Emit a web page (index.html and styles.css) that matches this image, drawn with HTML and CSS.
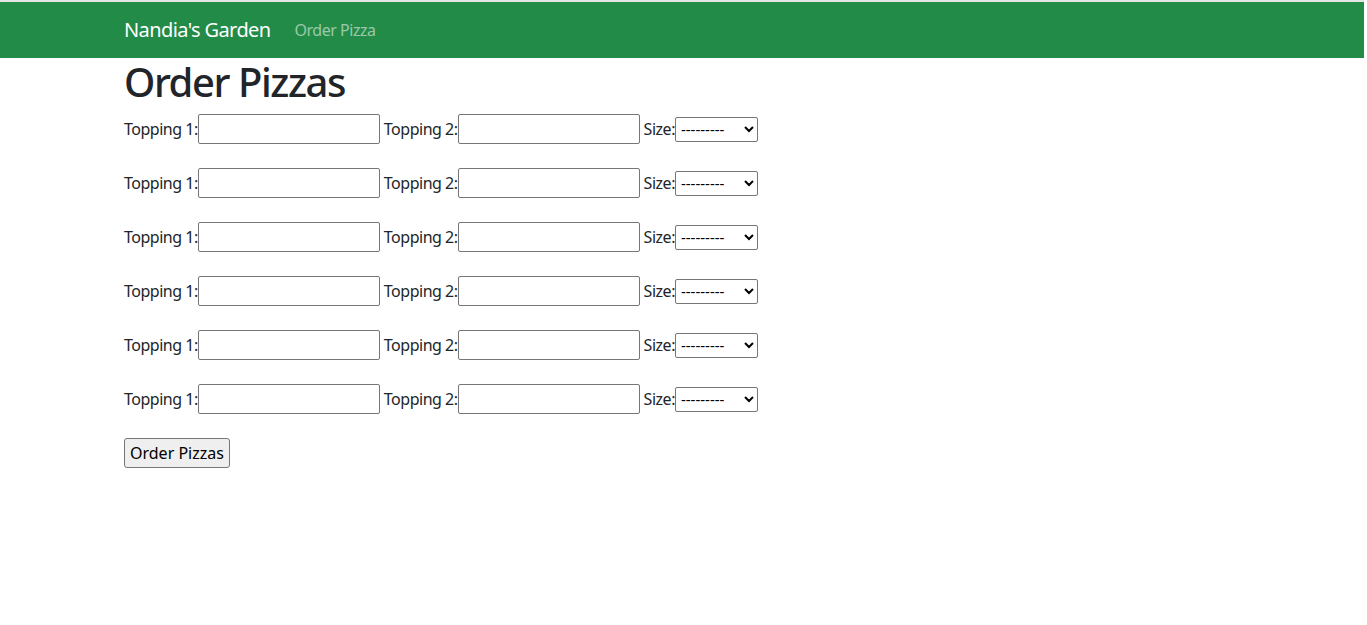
FILE: index.html
```html
<!DOCTYPE html>
<html lang="en">
<head>
<meta charset="utf-8">
<title>Order Pizzas</title>
<link rel="stylesheet" href="styles.css">
</head>
<body>
<nav class="navbar">
  <div class="container nav-inner">
    <a class="brand" href="#">Nandia's Garden</a>
    <a class="nav-link" href="#">Order Pizza</a>
  </div>
</nav>
<main class="container">
  <h1 class="title">Order Pizzas</h1>
  <form class="order-form">
    <div class="pizza-row">
      <label class="lbl">Topping 1:</label><input class="txt" type="text">
      <label class="lbl gap">Topping 2:</label><input class="txt" type="text">
      <label class="lbl gap">Size:</label><select class="sel"><option>---------</option><option>Small</option><option>Medium</option><option>Large</option></select>
    </div>
    <div class="pizza-row">
      <label class="lbl">Topping 1:</label><input class="txt" type="text">
      <label class="lbl gap">Topping 2:</label><input class="txt" type="text">
      <label class="lbl gap">Size:</label><select class="sel"><option>---------</option><option>Small</option><option>Medium</option><option>Large</option></select>
    </div>
    <div class="pizza-row">
      <label class="lbl">Topping 1:</label><input class="txt" type="text">
      <label class="lbl gap">Topping 2:</label><input class="txt" type="text">
      <label class="lbl gap">Size:</label><select class="sel"><option>---------</option><option>Small</option><option>Medium</option><option>Large</option></select>
    </div>
    <div class="pizza-row">
      <label class="lbl">Topping 1:</label><input class="txt" type="text">
      <label class="lbl gap">Topping 2:</label><input class="txt" type="text">
      <label class="lbl gap">Size:</label><select class="sel"><option>---------</option><option>Small</option><option>Medium</option><option>Large</option></select>
    </div>
    <div class="pizza-row">
      <label class="lbl">Topping 1:</label><input class="txt" type="text">
      <label class="lbl gap">Topping 2:</label><input class="txt" type="text">
      <label class="lbl gap">Size:</label><select class="sel"><option>---------</option><option>Small</option><option>Medium</option><option>Large</option></select>
    </div>
    <div class="pizza-row">
      <label class="lbl">Topping 1:</label><input class="txt" type="text">
      <label class="lbl gap">Topping 2:</label><input class="txt" type="text">
      <label class="lbl gap">Size:</label><select class="sel"><option>---------</option><option>Small</option><option>Medium</option><option>Large</option></select>
    </div>
    <button class="btn" type="submit">Order Pizzas</button>
  </form>
</main>
</body>
</html>
```
FILE: styles.css
```css
*, *::before, *::after { box-sizing: border-box; }

html { background: #fff; }

body {
  margin: 0 3px 0 0;
  border-top: 2px solid #e4e4e4;
  font-family: "Noto Sans", "Open Sans", sans-serif;
  font-size: 16px;
  line-height: 1.5;
  letter-spacing: -0.03em;
  color: #212529;
  background: #fff;
}

.container {
  width: 100%;
  max-width: 1140px;
  margin: 0 auto;
  padding: 0 12px;
}

.navbar {
  background: #228b47;
  padding: 8px 0;
}

.nav-inner {
  display: flex;
  align-items: center;
}

.brand {
  font-size: 20px;
  line-height: 30px;
  padding: 5px 0;
  margin-right: 16px;
  color: #fff;
  text-decoration: none;
  letter-spacing: -0.03em;
}

.nav-link {
  padding: 8px;
  color: rgba(255, 255, 255, 0.55);
  text-decoration: none;
  line-height: 24px;
}

.title {
  margin: 0 0 8px;
  font-size: 40px;
  font-weight: 500;
  line-height: 1.2;
  letter-spacing: -0.036em;
}

.pizza-row {
  display: flex;
  align-items: center;
  height: 30px;
  margin-bottom: 24px;
}

.lbl { white-space: nowrap; }

.lbl.gap { margin-left: 4px; }

.txt {
  width: 182px;
  height: 30px;
  margin: 0;
  font: inherit;
  padding: 1px 2px;
  border: 1px solid #767676;
  border-radius: 2px;
  background: #fff;
}

.sel {
  width: 83px;
  height: 25px;
  margin: 0;
  padding: 0 0 0 1px;
  font-family: inherit;
  font-size: 15px;
  letter-spacing: 0;
  line-height: 1;
  border: 1px solid #767676;
  border-radius: 2px;
  background: #fff;
  color: #000;
}

.btn {
  height: 30px;
  padding: 1px 5px;
  font: inherit;
  color: #000;
  background: #efefef;
  border: 1px solid #767676;
  border-radius: 3px;
}
```
